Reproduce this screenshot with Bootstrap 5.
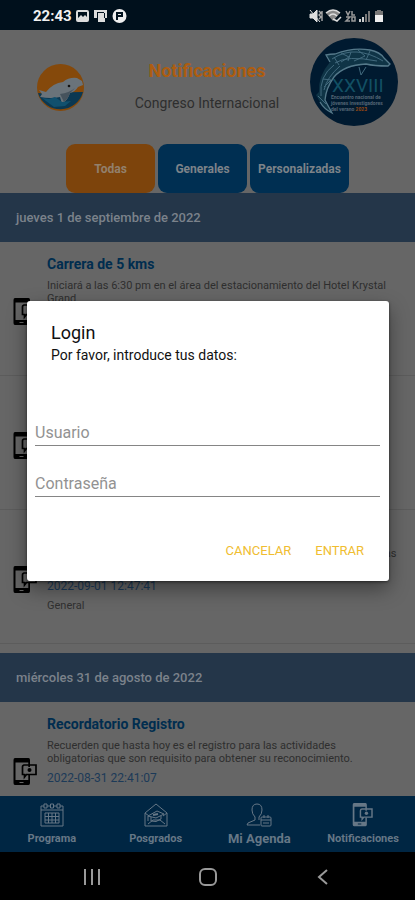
<!DOCTYPE html>
<html lang="es">
<head>
<meta charset="utf-8">
<meta name="viewport" content="width=device-width, initial-scale=1">
<title>Notificaciones</title>
<link href="https://cdn.jsdelivr.net/npm/bootstrap@5.3.0/dist/css/bootstrap.min.css" rel="stylesheet">
<style>
  body { font-family: Roboto, "Liberation Sans", sans-serif; background: #666; color: #2e2e2e; }
  .status-bar { height: 30px; background: #00101c; color: #f1f1f1; padding: 2px 30px 0 33px; font-size: 15px; }
  .brand-row { height: 114px; padding: 0 17px 0 37px; }
  .event-logo { margin-top: 8px; }
  .screen-title { font-size: 18px; line-height: 20px; color: #ad5d10; margin-bottom: 12px; }
  .screen-sub { font-size: 14px; line-height: 20px; }
  .filters { gap: 3px; }
  .filter-btn { height: 49px; min-width: 89px; padding: 0 8px; border: 0; border-radius: 9px; font-size: 12px; font-weight: 700; color: #7d8389; background: #002f52; }
  .filter-btn.on { background: #7d440c; color: #92806c; }
  .day-band { height: 49px; padding: 0 16px; background: #243649; color: #7b828b; font-size: 13px; font-weight: 500; margin: 0; }
  .notice { height: 134px; padding: 12px 16px 0 13px; border-bottom: 1px solid #5c5c5c; }
  .notice-icon { margin-top: 44px; margin-right: 9px; }
  .notice h3 { font-size: 14px; line-height: 20px; color: #002d4f; font-weight: 700; margin-bottom: 5px; }
  .notice p { font-size: 11px; line-height: 13px; margin-bottom: 6px; }
  .notice time { font-size: 12px; line-height: 14px; color: #1c3a58; }
  .notice .kind { font-size: 11px; line-height: 14px; margin-top: 6px; color: #303030; }
  .day-group { padding-bottom: 9px; }
  .tab-bar { height: 56px; background: #002643; }
  .tab-bar a { color: #667786; font-size: 11px; line-height: 16px; font-weight: 700; padding-top: 7px; }
  .tab-bar a.big { font-size: 13px; }
  .system-bar { height: 48px; background: #000; padding: 0 34px; }
  .system-bar button { background: none; border: 0; padding: 0; }
  .overlay { padding: 0 26px 0 27px; inset: 30px 0 48px; }
  .login-box { background: #fff; border-radius: 3px; padding: 20px 9px 14px 8px; box-shadow: 0 8px 20px rgba(0,0,0,.4), 0 1px 3px rgba(0,0,0,.5); color: #111; }
  .login-box h2 { font-size: 18px; line-height: 24px; margin: 0 16px; font-weight: 400; }
  .login-box .hint { font-size: 14px; line-height: 20px; margin: 0 16px 55px; }
  .login-box input { border: 0; border-bottom: 1px solid #858585; border-radius: 0; padding: 0; height: 26px; font-size: 16px; line-height: 24px; background: none; color: #222; margin-bottom: 25px; }
  .login-box input::placeholder { color: #929292; opacity: 1; }
  .login-box .actions { margin-top: 38px; gap: 8px; padding-right: 8px; }
  .login-box .actions button { border: 0; background: none; color: #f0bd30; font-size: 13px; height: 32px; padding: 0 8px; }
</style>
<script src="https://cdn.jsdelivr.net/npm/bootstrap@5.3.0/dist/js/bootstrap.bundle.min.js"></script>
</head>
<body>
<svg class="d-none" aria-hidden="true">
  <symbol id="phone" viewBox="0 0 24 28">
    <path fill="currentColor" fill-rule="evenodd" d="M1.500 0H15q1.500 0 1.500 2v7h-1.700V4.500H2V22h12.800v-5h1.700v8q0 2-1.500 2H1.500Q0 27 0 25V2Q0 0 1.500 0zM6 24v1h4v-1z"/>
    <path d="M10 7h12.500v9.500H13l-2 2.500v-2.500H9V9q0-2 2-2" fill="none" stroke="currentColor" stroke-width="1.700"/>
    <circle cx="16" cy="12" r="2" fill="currentColor"/>
  </symbol>
</svg>

<div class="vh-100 d-flex flex-column overflow-hidden position-relative">
  <div class="status-bar d-flex align-items-center flex-shrink-0">
    <span class="fw-bold me-1">22:43</span>
    <svg width="54" height="14" viewBox="0 0 54 14" aria-hidden="true">
      <path fill="#ddd" fill-rule="evenodd" d="M2 1h9q2 0 2 2v8q0 2-2 2H2q-2 0-2-2V3q0-2 2-2zM2 3v6l3-3 2 2 2-2 2 2V3z"/>
      <path fill="#ddd" d="M18 1h13v8h-2v4h-7V9h-1v0h-3z"/><path d="M21 3.500h7M21.500 4v5M28.500 4v5" stroke="#00101c"/>
      <circle cx="43.500" cy="7" r="7" fill="#eee"/><path d="M41 3v8M41 4h5v3h-4" stroke="#00101c" stroke-width="2" fill="none"/>
    </svg>
    <svg class="ms-auto" width="76" height="14" viewBox="0 0 76 14" aria-hidden="true">
      <path d="M1 5h3l4-4v12L4 9H1zM1 1l10 12" fill="#ddd" stroke="#ddd"/>
      <path d="M10 2l2 2-2 2 2 2-2 2M13 2v10" stroke="#aaa" fill="none" stroke-width="1.400"/>
      <path d="M17 4q7-6 14 0l-7 8z" fill="#888"/><path d="M17 4q7-6 14 0M20 7q4-4 8 0M24 10l4 2 4-4" stroke="#ddd" stroke-width="1.500" fill="none"/>
      <path d="M37 2l2 4 2-4M43 2v4h3M37 8h4l-4 4h4M43 8h3v4h-3z" stroke="#999" stroke-width="1.500" fill="none"/>
      <path d="M50 10h2v3h-2zM53 8h2v5h-2z" fill="#ccc"/><path d="M56 5h2v8h-2zM59 2h2v11h-2z" fill="#777"/>
      <path d="M66 2h2V1h4v1h2v4h-8z" fill="#777"/><path d="M66 6h8v7h-8z" fill="#eee"/>
    </svg>
  </div>

  <header class="flex-shrink-0">
    <div class="brand-row d-flex align-items-center justify-content-between">
      <svg width="47" height="47" viewBox="0 0 47 47" role="img" aria-label="Delfín">
        <circle cx="23.500" cy="23.500" r="23.500" fill="#85490b"/>
        <path d="M1 29q10 1 20 0t25-1a23.500 23.500 0 0 1-45 1z" fill="#0b3852"/>
        <path d="M2 26l7 2q7-9 17-10 6-5 14-4l5 3 1 4-5 2q-3 5-8 6-2 7-8 11l-2-7q-9 2-20 0l2-3z" fill="#6a737a"/>
        <path d="M23 30q9-1 15-6l-5 5q-2 6-6 9z" fill="#46535d"/><circle cx="32" cy="22" r="1.300" fill="#111"/>
        <path d="M5 34l7 1 6-2 7 5 9-1-6 5-11 1z" fill="#11506e"/>
      </svg>
      <div class="text-center flex-fill ps-3 ms-1">
        <h1 class="screen-title fw-bold">Notificaciones</h1>
        <div class="screen-sub">Congreso Internacional</div>
      </div>
      <svg class="event-logo align-self-start" width="88" height="88" viewBox="0 0 88 88" role="img" aria-label="XXVIII Congreso">
        <circle cx="44" cy="44" r="44" fill="#001a30"/>
        <path d="M20 24l-4-7q4-1 9-1 18-7 35-4 10 2 14 8l6 6-2 2q-14 0-22-2l-3 1Q34 28 24 39 16 50 15 62l7 13q-8-4-12-11l-4-7 3-3Q8 38 20 24z" fill="#0f3446"/>
        <path d="M20 24l-4-7q4-1 9-1 18-7 35-4 10 2 14 8l6 6-2 2q-14 0-22-2Q34 27 24 39 16 50 15 62l7 13q-8-4-12-11" fill="none" stroke="#55798a" stroke-width="1.300"/>
        <path d="M22 21q12-8 25-7t26 9M25 25q12-8 42-2M11 58q-2-20 13-31M14 52q3-13 16-24M31 15l8 4-8 5M48 12l7 6-11 5M13 41l8 1-7 7M24 19l5 8M41 14l-3 9M60 13l-4 9M49 29l2 8 5-8M8 58l8 8" fill="none" stroke="#426a7e" stroke-width="1"/>
        <text x="22" y="54" font-size="19" fill="#125064">XXVIII</text>
        <g font-size="5" font-weight="700" fill="#536575"><text x="21" y="61">Encuentro nacional de</text><text x="21" y="67">jóvenes investigadores</text><text x="21" y="73">del verano <tspan fill="#964712">2023</tspan></text></g>
      </svg>
    </div>
    <div class="filters d-flex justify-content-center">
      <button type="button" class="filter-btn on">Todas</button>
      <button type="button" class="filter-btn">Generales</button>
      <button type="button" class="filter-btn">Personalizadas</button>
    </div>
  </header>

  <main class="flex-fill overflow-hidden">
    <section class="day-group">
      <h2 class="day-band d-flex align-items-center">jueves 1 de septiembre de 2022</h2>
      <article class="notice d-flex pe-4">
        <svg class="notice-icon flex-shrink-0 text-black" width="25" height="28"><use href="#phone"/></svg>
        <div><h3>Carrera de 5 kms</h3><p>Iniciará a las 6:30 pm en el área del estacionamiento del Hotel Krystal Grand</p></div>
      </article>
      <article class="notice d-flex">
        <svg class="notice-icon flex-shrink-0 text-black" width="25" height="28"><use href="#phone"/></svg>
      </article>
      <article class="notice d-flex">
        <svg class="notice-icon flex-shrink-0 text-black" width="25" height="28"><use href="#phone"/></svg>
        <div><h3>Registro</h3><p>Recuerden que hasta hoy es el registro para las actividades obligatorias que son requisito.</p>
        <time class="d-block">2022-09-01 12:47:41</time><div class="kind">General</div></div>
      </article>
    </section>
    <section class="day-group">
      <h2 class="day-band d-flex align-items-center">miércoles 31 de agosto de 2022</h2>
      <article class="notice d-flex pe-4">
        <svg class="notice-icon flex-shrink-0 text-black" width="25" height="28"><use href="#phone"/></svg>
        <div><h3>Recordatorio Registro</h3><p>Recuerden que hasta hoy es el registro para las actividades obligatorias que son requisito para obtener su reconocimiento.</p>
        <time class="d-block">2022-08-31 22:41:07</time></div>
      </article>
    </section>
  </main>

  <nav class="tab-bar row g-0 flex-shrink-0 text-center">
    <a href="#" class="col text-decoration-none">
      <svg class="d-block mx-auto mb-1" width="24" height="24" viewBox="0 0 24 24" fill="none" stroke="currentColor"><path d="M4 3H1v20h22V3h-3M7 3h3M14 3h3M1 7h22M4 1h3v4H4zM10.500 1h3v4h-3zM17 1h3v4h-3zM5 10h14v10H5zM5 13.500h14M5 17h14M8.500 10v10M12 10v10M15.500 10v10"/></svg>Programa</a>
    <a href="#" class="col text-decoration-none">
      <svg class="d-block mx-auto mb-1" width="24" height="24" viewBox="0 0 24 24" fill="none" stroke="currentColor"><path d="M1 10L12 1l11 9v13H1zM1 10l4 3M23 10l-4 3M4 21l5-4h7l5 4M4 13l9-5 7 3-8 4zM7 14v4q5 2 10-2v-3M4 13v5"/><path d="M9 12l5-1" stroke-width="2"/></svg>Posgrados</a>
    <a href="#" class="col text-decoration-none big">
      <svg class="d-block mx-auto mb-1" width="26" height="24" viewBox="0 0 26 24" fill="none" stroke="currentColor"><path d="M6 7q0-6 5-6t5 6q0 4-3 7v3M9 14Q6 11 6 7M9 14v3l-7 3-1 2h13"/><rect x="15" y="14" width="10" height="9" rx="1"/><path d="M15 17h10M18 12v3M22 12v3M17 20h6"/></svg>Mi Agenda</a>
    <a href="#" class="col text-decoration-none">
      <svg class="d-block mx-auto mb-1" width="22" height="24"><use href="#phone"/></svg>Notificaciones</a>
  </nav>

  <div class="system-bar row g-0 flex-shrink-0">
    <button type="button" class="col" aria-label="Recientes"><svg width="18" height="18" stroke="#999" stroke-width="2"><path d="M2 1v16M9 1v16M16 1v16"/></svg></button>
    <button type="button" class="col" aria-label="Inicio"><svg width="20" height="20" fill="none" stroke="#999" stroke-width="2"><rect x="2" y="2" width="16" height="16" rx="5"/></svg></button>
    <button type="button" class="col" aria-label="Atrás"><svg width="12" height="18" fill="none" stroke="#999" stroke-width="2"><path d="M10 2L2 9l8 7"/></svg></button>
  </div>

  <div class="overlay position-absolute d-flex align-items-center">
    <form class="login-box w-100" role="dialog" aria-labelledby="login-title">
      <h2 id="login-title">Login</h2>
      <p class="hint">Por favor, introduce tus datos:</p>
      <input class="d-block w-100" type="text" placeholder="Usuario" aria-label="Usuario">
      <input class="d-block w-100" type="password" placeholder="Contraseña" aria-label="Contraseña">
      <div class="actions d-flex justify-content-end">
        <button type="button">CANCELAR</button>
        <button type="submit">ENTRAR</button>
      </div>
    </form>
  </div>
</div>
</body>
</html>
